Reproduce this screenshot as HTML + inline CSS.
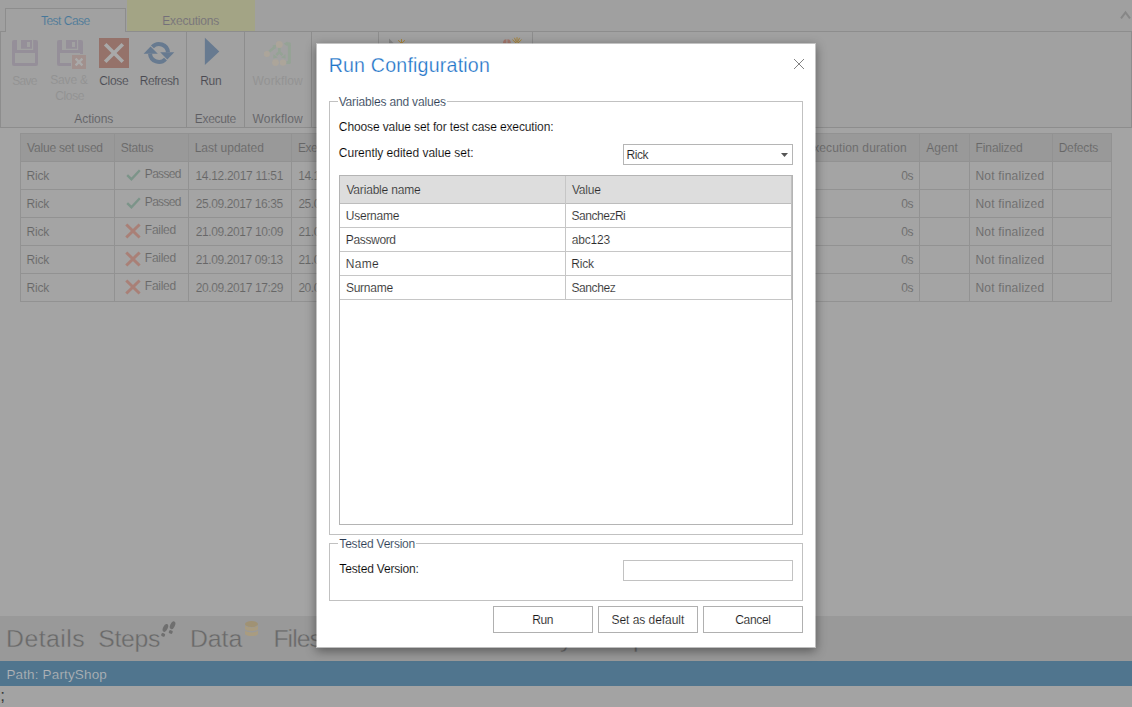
<!DOCTYPE html>
<html>
<head>
<meta charset="utf-8">
<title>Run Configuration</title>
<style>
html,body{margin:0;padding:0;}
body{width:1132px;height:707px;overflow:hidden;position:relative;background:#a4a4a4;font-family:"Liberation Sans", sans-serif;}
.t{position:absolute;white-space:nowrap;line-height:normal;font-family:"Liberation Sans", sans-serif;}
.b{position:absolute;box-sizing:border-box;}
.vl{position:absolute;width:1px;background:#929292;}
.hl{position:absolute;height:1px;background:#929292;}
svg{position:absolute;overflow:visible;}
</style>
</head>
<body>
<!-- ===== dimmed application background ===== -->
<div class="b" style="left:0;top:0;width:1132px;height:31px;background:#a0a0a0;"></div>
<div class="b" style="left:127px;top:0;width:128px;height:31px;background:#a3a485;"></div>
<!-- ribbon -->
<div class="b" style="left:0;top:31px;width:1132px;height:97px;background:#a1a1a1;border:1px solid #8d8d8d;"></div>
<div class="b" style="left:5px;top:8px;width:121px;height:24px;background:#a1a1a1;border:1px solid #8d8d8d;border-bottom:none;"></div>
<div class="vl" style="left:186px;top:32px;height:95px;background:#8d8d8d;"></div>
<div class="vl" style="left:244px;top:32px;height:95px;background:#8d8d8d;"></div>
<div class="vl" style="left:311px;top:32px;height:95px;background:#8d8d8d;"></div>
<div class="vl" style="left:378px;top:32px;height:95px;background:#8d8d8d;"></div>
<div class="vl" style="left:532px;top:32px;height:95px;background:#8d8d8d;"></div>
<!-- chevron -->
<svg style="left:1120px;top:10px;" width="11" height="10" viewBox="0 0 11 10"><path d="M1 8.3 L5.5 2.4 L10 8.3" fill="none" stroke="#878787" stroke-width="2"/></svg>

<!-- table -->
<div class="b" style="left:20px;top:133px;width:1092px;height:169px;border:1px solid #929292;"></div>
<div class="b" style="left:21px;top:134px;width:1090px;height:27px;background:#999999;"></div>
<div class="hl" style="left:20px;top:161px;width:1092px;"></div>
<div class="hl" style="left:20px;top:189px;width:1092px;"></div>
<div class="hl" style="left:20px;top:217px;width:1092px;"></div>
<div class="hl" style="left:20px;top:245px;width:1092px;"></div>
<div class="hl" style="left:20px;top:273px;width:1092px;"></div>
<div class="vl" style="left:114px;top:133px;height:169px;"></div>
<div class="vl" style="left:188px;top:133px;height:169px;"></div>
<div class="vl" style="left:291px;top:133px;height:169px;"></div>
<div class="vl" style="left:919px;top:133px;height:169px;"></div>
<div class="vl" style="left:969px;top:133px;height:169px;"></div>
<div class="vl" style="left:1052px;top:133px;height:169px;"></div>

<!-- bottom -->
<div class="b" style="left:0;top:616px;width:1132px;height:45px;background:#999999;"></div>
<div class="b" style="left:0;top:661px;width:1132px;height:25px;background:#50758e;"></div>
<div class="b" style="left:0;top:686px;width:1132px;height:21px;background:#a3a3a3;"></div>

<!-- save icon -->
<svg style="left:12px;top:40px;" width="26" height="26" viewBox="0 0 26 26"><rect x="0" y="0" width="26" height="26" rx="2" fill="#958f99"/><rect x="5" y="-1" width="16.2" height="11" fill="#a1a1a1"/><rect x="9" y="0" width="11" height="8.7" fill="#958f99"/><rect x="15" y="2" width="3" height="5" fill="#a1a1a1"/><rect x="3" y="13" width="20" height="10" fill="#a1a1a1"/></svg>
<!-- save & close icon -->
<svg style="left:57px;top:40px;" width="30" height="30" viewBox="0 0 30 30"><rect x="0" y="0" width="26" height="26" rx="2" fill="#958f99"/><rect x="5" y="-1" width="16.2" height="11" fill="#a1a1a1"/><rect x="9" y="0" width="11" height="8.7" fill="#958f99"/><rect x="15" y="2" width="3" height="5" fill="#a1a1a1"/><rect x="3" y="13" width="20" height="10" fill="#a1a1a1"/><rect x="14" y="14" width="16" height="16" fill="#a1a1a1"/><rect x="15" y="15" width="14" height="14" fill="#a1908d"/><path d="M18.6 18.6 L25.4 25.4 M25.4 18.6 L18.6 25.4" stroke="#aaaaaa" stroke-width="2.3" fill="none"/></svg>
<!-- close icon -->
<svg style="left:99px;top:38px;" width="30" height="30" viewBox="0 0 30 30"><rect width="30" height="30" fill="#95726a"/><path d="M6.2 6.2 L23.8 23.8 M23.8 6.2 L6.2 23.8" stroke="#a9a9a9" stroke-width="3.6" fill="none"/></svg>
<!-- refresh icon -->
<svg style="left:143px;top:41px;" width="32" height="24" viewBox="143 41 32 24"><path d="M152.4 46.9 A9 9 0 0 1 167.97 52.2" fill="none" stroke="#677a90" stroke-width="4"/><path d="M165.5 59.2 A9 9 0 0 1 150.03 53.8" fill="none" stroke="#677a90" stroke-width="4"/><path d="M160.2 52.2 H174.3 L167.3 59.4 Z" fill="#677a90"/><path d="M143.6 53.8 H157.8 L150.6 46.4 Z" fill="#677a90"/></svg>
<!-- run icon -->
<svg style="left:204px;top:37px;" width="16" height="29" viewBox="204 37 16 29"><path d="M204.9 37.7 L219.3 51.4 L204.9 65.1 Z" fill="#677a90"/></svg>
<!-- workflow icon (disabled) -->
<svg style="left:262px;top:40px;" width="30" height="27" viewBox="262 40 30 27"><g fill="none" stroke="#95a395" stroke-width="2.6" stroke-linejoin="round"><path d="M269.4 51.6 L274.4 47.2"/><path d="M279.3 47.5 V52 L276.4 55.2 M279.3 52 L282.4 55.2"/><path d="M286.4 62.4 H289.4 V43.8 H286.8" stroke-width="3"/></g><g fill="#95a395"><path d="M272.4 45.4 L276.6 44.4 L275.6 48.8 Z"/><path d="M273.4 54.2 L277.8 57.4 L273.2 58.4 Z"/><path d="M285.4 54.2 L281 57.4 L285.6 58.4 Z"/><path d="M287.4 41.4 V46.2 L283.6 43.8 Z"/></g><g fill="#aca59a"><circle cx="279.3" cy="44.5" r="3.5"/><circle cx="266.9" cy="53.9" r="3"/><circle cx="275.5" cy="62.6" r="3.4"/><circle cx="283" cy="62.6" r="3.2"/></g></svg>
<!-- hidden small ribbon icons peeking above the dialog -->
<svg style="left:388px;top:36px;" width="20" height="8" viewBox="388 36 20 8"><path d="M389 38.6 L393.6 43.2 H389 Z" fill="#858585"/><path d="M401.5 39 V43 M398 40.2 L401 43 M405 40.2 L402 43" stroke="#a8853c" stroke-width="1" fill="none"/></svg>
<svg style="left:502px;top:36px;" width="22" height="8" viewBox="502 36 22 8"><path d="M503 43.2 Q503 39.2 506.4 39.2 V43.2 Z M507.4 39.2 Q510.8 39.2 510.8 43.2 H507.4 Z" fill="#a4776c"/><path d="M517 37.2 V43 M512.4 39.6 L516 43 M521.6 39.6 L518 43 M514.4 37.8 L516.4 42 M519.6 37.8 L517.6 42" stroke="#a8853c" stroke-width="1" fill="none"/></svg>
<!-- status icons -->
<svg style="left:120px;top:161px;" width="30" height="140" viewBox="120 161 30 140">
<g fill="none" stroke="#7c9489" stroke-width="2.4"><path d="M127.2 175.2 L131.4 179.2 L139.8 170.2"/><path d="M127.2 203.2 L131.4 207.2 L139.8 198.2"/></g>
<g fill="none" stroke="#a98077" stroke-width="3"><path d="M126.3 224.5 L139.6 237.5 M139.6 224.5 L126.3 237.5"/><path d="M126.3 252.5 L139.6 265.5 M139.6 252.5 L126.3 265.5"/><path d="M126.3 280.5 L139.6 293.5 M139.6 280.5 L126.3 293.5"/></g></svg>
<!-- footprints -->
<svg style="left:160px;top:620px;" width="17" height="18" viewBox="160 620 17 18"><g fill="#6f6f6f"><ellipse cx="165.4" cy="627.9" rx="2.3" ry="4.2" transform="rotate(25 165.4 627.9)"/><rect x="161.3" y="633.2" width="3.7" height="3.3" rx="1.1" transform="rotate(25 163.1 634.8)"/><ellipse cx="172.6" cy="625.2" rx="2.3" ry="4.2" transform="rotate(25 172.6 625.2)"/><rect x="168.9" y="630.4" width="3.7" height="3.3" rx="1.1" transform="rotate(25 170.8 632)"/></g></svg>
<!-- database -->
<svg style="left:245px;top:621px;" width="13" height="16" viewBox="0 0 13 16"><ellipse cx="6.5" cy="3" rx="6.5" ry="3" fill="#a09274"/><path d="M0 4.6 C1 7 12 7 13 4.6 V8 C12 10.6 1 10.6 0 8 Z" fill="#a99c80"/><path d="M0 9.6 C1 12 12 12 13 9.6 V13 C12 15.8 1 15.8 0 13 Z" fill="#a99c80"/></svg>

<span class="t" style="left:40.93px;top:14.00px;font-size:12px;color:#47789a;letter-spacing:-0.500px;-webkit-text-stroke:0.15px #a1a1a1;">Test Case</span>
<span class="t" style="left:162.30px;top:14.00px;font-size:12px;color:#74707a;letter-spacing:-0.198px;-webkit-text-stroke:0.15px #a3a485;">Executions</span>
<span class="t" style="left:12.33px;top:74.00px;font-size:12px;color:#919191;letter-spacing:-0.717px;-webkit-text-stroke:0.15px #a1a1a1;">Save</span>
<span class="t" style="left:50.23px;top:73.00px;font-size:12px;color:#919191;letter-spacing:-0.170px;-webkit-text-stroke:0.15px #a1a1a1;">Save &amp;</span>
<span class="t" style="left:55.16px;top:89.00px;font-size:12px;color:#919191;letter-spacing:-0.337px;-webkit-text-stroke:0.15px #a1a1a1;">Close</span>
<span class="t" style="left:99.26px;top:74.00px;font-size:12px;color:#4a4a52;letter-spacing:-0.337px;-webkit-text-stroke:0.15px #a1a1a1;">Close</span>
<span class="t" style="left:139.63px;top:74.00px;font-size:12px;color:#4a4a52;letter-spacing:-0.414px;-webkit-text-stroke:0.15px #a1a1a1;">Refresh</span>
<span class="t" style="left:200.23px;top:74.00px;font-size:12px;color:#4a4a52;letter-spacing:-0.337px;-webkit-text-stroke:0.15px #a1a1a1;">Run</span>
<span class="t" style="left:252.55px;top:74.00px;font-size:12px;color:#919191;letter-spacing:0.154px;-webkit-text-stroke:0.15px #a1a1a1;">Workflow</span>
<span class="t" style="left:74.30px;top:112.00px;font-size:12px;color:#5e5e63;letter-spacing:-0.052px;-webkit-text-stroke:0.15px #a1a1a1;">Actions</span>
<span class="t" style="left:194.80px;top:112.00px;font-size:12px;color:#5e5e63;letter-spacing:-0.323px;-webkit-text-stroke:0.15px #a1a1a1;">Execute</span>
<span class="t" style="left:252.55px;top:112.00px;font-size:12px;color:#5e5e63;letter-spacing:0.154px;-webkit-text-stroke:0.15px #a1a1a1;">Workflow</span>
<span class="t" style="left:27.10px;top:141.00px;font-size:12px;color:#676767;letter-spacing:-0.196px;-webkit-text-stroke:0.15px #999999;">Value set used</span>
<span class="t" style="left:120.72px;top:141.00px;font-size:12px;color:#676767;letter-spacing:-0.270px;-webkit-text-stroke:0.15px #999999;">Status</span>
<span class="t" style="left:194.70px;top:141.00px;font-size:12px;color:#676767;letter-spacing:-0.022px;-webkit-text-stroke:0.15px #999999;">Last updated</span>
<span class="t" style="left:297.90px;top:141.00px;font-size:12px;color:#676767;letter-spacing:-0.450px;-webkit-text-stroke:0.15px #999999;">Exe</span>
<span class="t" style="left:805.00px;top:141.00px;font-size:12px;color:#676767;letter-spacing:0.130px;-webkit-text-stroke:0.15px #999999;">Execution duration</span>
<span class="t" style="left:926.21px;top:141.00px;font-size:12px;color:#676767;letter-spacing:0.051px;-webkit-text-stroke:0.15px #999999;">Agent</span>
<span class="t" style="left:975.53px;top:141.00px;font-size:12px;color:#676767;letter-spacing:-0.099px;-webkit-text-stroke:0.15px #999999;">Finalized</span>
<span class="t" style="left:1058.63px;top:141.00px;font-size:12px;color:#676767;letter-spacing:-0.169px;-webkit-text-stroke:0.15px #999999;">Defects</span>
<span class="t" style="left:26.53px;top:169.00px;font-size:12px;color:#676767;letter-spacing:-0.230px;-webkit-text-stroke:0.15px #a4a4a4;">Rick</span>
<span class="t" style="left:144.83px;top:167.00px;font-size:12px;color:#676767;letter-spacing:-0.691px;-webkit-text-stroke:0.15px #a4a4a4;">Passed</span>
<span class="t" style="left:195.47px;top:169.00px;font-size:12px;color:#676767;letter-spacing:-0.307px;-webkit-text-stroke:0.15px #a4a4a4;">14.12.2017 11:51</span>
<span class="t" style="left:298.17px;top:169.00px;font-size:12px;color:#676767;letter-spacing:-0.450px;-webkit-text-stroke:0.15px #a4a4a4;">14.12.</span>
<span class="t" style="left:901.29px;top:169.00px;font-size:12px;color:#676767;letter-spacing:-0.455px;-webkit-text-stroke:0.15px #a4a4a4;">0s</span>
<span class="t" style="left:975.40px;top:169.00px;font-size:12px;color:#676767;letter-spacing:0.220px;-webkit-text-stroke:0.15px #a4a4a4;">Not finalized</span>
<span class="t" style="left:26.53px;top:197.00px;font-size:12px;color:#676767;letter-spacing:-0.230px;-webkit-text-stroke:0.15px #a4a4a4;">Rick</span>
<span class="t" style="left:144.83px;top:195.00px;font-size:12px;color:#676767;letter-spacing:-0.691px;-webkit-text-stroke:0.15px #a4a4a4;">Passed</span>
<span class="t" style="left:195.68px;top:197.00px;font-size:12px;color:#676767;letter-spacing:-0.390px;-webkit-text-stroke:0.15px #a4a4a4;">25.09.2017 16:35</span>
<span class="t" style="left:298.38px;top:197.00px;font-size:12px;color:#676767;letter-spacing:-0.450px;-webkit-text-stroke:0.15px #a4a4a4;">25.09.</span>
<span class="t" style="left:901.29px;top:197.00px;font-size:12px;color:#676767;letter-spacing:-0.455px;-webkit-text-stroke:0.15px #a4a4a4;">0s</span>
<span class="t" style="left:975.40px;top:197.00px;font-size:12px;color:#676767;letter-spacing:0.220px;-webkit-text-stroke:0.15px #a4a4a4;">Not finalized</span>
<span class="t" style="left:26.53px;top:225.00px;font-size:12px;color:#676767;letter-spacing:-0.230px;-webkit-text-stroke:0.15px #a4a4a4;">Rick</span>
<span class="t" style="left:144.83px;top:223.00px;font-size:12px;color:#676767;letter-spacing:-0.271px;-webkit-text-stroke:0.15px #a4a4a4;">Failed</span>
<span class="t" style="left:195.68px;top:225.00px;font-size:12px;color:#676767;letter-spacing:-0.380px;-webkit-text-stroke:0.15px #a4a4a4;">21.09.2017 10:09</span>
<span class="t" style="left:298.38px;top:225.00px;font-size:12px;color:#676767;letter-spacing:-0.450px;-webkit-text-stroke:0.15px #a4a4a4;">21.09.</span>
<span class="t" style="left:901.29px;top:225.00px;font-size:12px;color:#676767;letter-spacing:-0.455px;-webkit-text-stroke:0.15px #a4a4a4;">0s</span>
<span class="t" style="left:975.40px;top:225.00px;font-size:12px;color:#676767;letter-spacing:0.220px;-webkit-text-stroke:0.15px #a4a4a4;">Not finalized</span>
<span class="t" style="left:26.53px;top:253.00px;font-size:12px;color:#676767;letter-spacing:-0.230px;-webkit-text-stroke:0.15px #a4a4a4;">Rick</span>
<span class="t" style="left:144.83px;top:251.00px;font-size:12px;color:#676767;letter-spacing:-0.271px;-webkit-text-stroke:0.15px #a4a4a4;">Failed</span>
<span class="t" style="left:195.68px;top:253.00px;font-size:12px;color:#676767;letter-spacing:-0.391px;-webkit-text-stroke:0.15px #a4a4a4;">21.09.2017 09:13</span>
<span class="t" style="left:298.38px;top:253.00px;font-size:12px;color:#676767;letter-spacing:-0.450px;-webkit-text-stroke:0.15px #a4a4a4;">21.09.</span>
<span class="t" style="left:901.29px;top:253.00px;font-size:12px;color:#676767;letter-spacing:-0.455px;-webkit-text-stroke:0.15px #a4a4a4;">0s</span>
<span class="t" style="left:975.40px;top:253.00px;font-size:12px;color:#676767;letter-spacing:0.220px;-webkit-text-stroke:0.15px #a4a4a4;">Not finalized</span>
<span class="t" style="left:26.53px;top:281.00px;font-size:12px;color:#676767;letter-spacing:-0.230px;-webkit-text-stroke:0.15px #a4a4a4;">Rick</span>
<span class="t" style="left:144.83px;top:279.00px;font-size:12px;color:#676767;letter-spacing:-0.271px;-webkit-text-stroke:0.15px #a4a4a4;">Failed</span>
<span class="t" style="left:195.68px;top:281.00px;font-size:12px;color:#676767;letter-spacing:-0.380px;-webkit-text-stroke:0.15px #a4a4a4;">20.09.2017 17:29</span>
<span class="t" style="left:298.38px;top:281.00px;font-size:12px;color:#676767;letter-spacing:-0.450px;-webkit-text-stroke:0.15px #a4a4a4;">20.09.</span>
<span class="t" style="left:901.29px;top:281.00px;font-size:12px;color:#676767;letter-spacing:-0.455px;-webkit-text-stroke:0.15px #a4a4a4;">0s</span>
<span class="t" style="left:975.40px;top:281.00px;font-size:12px;color:#676767;letter-spacing:0.220px;-webkit-text-stroke:0.15px #a4a4a4;">Not finalized</span>
<span class="t" style="left:6.09px;top:625.00px;font-size:24.8px;color:#6a6a6a;letter-spacing:0.464px;-webkit-text-stroke:0.4px #999999;">Details</span>
<span class="t" style="left:98.27px;top:625.00px;font-size:24.8px;color:#6a6a6a;letter-spacing:-0.300px;-webkit-text-stroke:0.4px #999999;">Steps</span>
<span class="t" style="left:189.89px;top:625.00px;font-size:24.8px;color:#6a6a6a;letter-spacing:-0.002px;-webkit-text-stroke:0.4px #999999;">Data</span>
<span class="t" style="left:273.39px;top:625.00px;font-size:24.8px;color:#6a6a6a;letter-spacing:-0.930px;-webkit-text-stroke:0.4px #999999;">Files</span>
<span class="t" style="left:500.79px;top:625.00px;font-size:24.8px;color:#6a6a6a;letter-spacing:-0.930px;-webkit-text-stroke:0.4px #999999;">History</span>
<span class="t" style="left:598.47px;top:625.00px;font-size:24.8px;color:#6a6a6a;letter-spacing:-0.930px;-webkit-text-stroke:0.4px #999999;">Steps</span>
<span class="t" style="left:6.38px;top:667.00px;font-size:13.5px;color:#b0b4b7;letter-spacing:0.153px;-webkit-text-stroke:0.15px #50758e;">Path: PartyShop</span>
<span class="t" style="left:0.20px;top:686.00px;font-size:17px;color:#3a3a3a;font-family:"Liberation Serif",serif;">;</span>

<!-- ===== dialog ===== -->
<div class="b" style="left:316px;top:43px;width:500px;height:605px;background:rgba(228,228,228,0.5);box-shadow:0 3px 10px 0 rgba(0,0,0,0.42);"></div>
<div class="b" style="left:317px;top:44px;width:498px;height:603px;background:#fff;"></div>
<svg style="left:794px;top:59px;" width="10" height="10" viewBox="0 0 10 10"><path d="M0 0 L10 10 M10 0 L0 10" stroke="#828282" stroke-width="1" fill="none"/></svg>
<!-- fieldset 1 -->
<div class="b" style="left:329px;top:101px;width:474px;height:434px;border:1px solid #c1c1c1;"></div>
<div class="b" style="left:338px;top:100px;width:109px;height:3px;background:#fff;"></div>
<!-- dropdown -->
<div class="b" style="left:623px;top:144px;width:170px;height:21px;border:1px solid #b5b5b5;background:#fff;"></div>
<svg style="left:781px;top:153px;" width="7" height="4" viewBox="0 0 7 4"><path d="M0 0 H7 L3.5 4 Z" fill="#555"/></svg>
<!-- grid -->
<div class="b" style="left:339px;top:175px;width:454px;height:350px;border:1px solid #b4b4b4;background:#fff;"></div>
<div class="b" style="left:340px;top:176px;width:451px;height:27px;background:#dddddd;"></div>
<div class="hl" style="left:340px;top:203px;width:452px;background:#bdbdbd;"></div>
<div class="hl" style="left:340px;top:227px;width:452px;background:#c6c6c6;"></div>
<div class="hl" style="left:340px;top:251px;width:452px;background:#c6c6c6;"></div>
<div class="hl" style="left:340px;top:275px;width:452px;background:#c6c6c6;"></div>
<div class="hl" style="left:340px;top:299px;width:452px;background:#c6c6c6;"></div>
<div class="vl" style="left:565px;top:176px;height:124px;background:#c6c6c6;"></div>
<div class="vl" style="left:791px;top:176px;height:124px;background:#c0c0c0;"></div>
<!-- fieldset 2 -->
<div class="b" style="left:329px;top:543px;width:474px;height:58px;border:1px solid #c1c1c1;"></div>
<div class="b" style="left:338px;top:542px;width:78px;height:3px;background:#fff;"></div>
<div class="b" style="left:623px;top:560px;width:170px;height:21px;border:1px solid #c2c2c2;background:#fff;"></div>
<!-- buttons -->
<div class="b" style="left:493px;top:606px;width:100px;height:27px;border:1px solid #b0b0b0;background:#fff;"></div>
<div class="b" style="left:598px;top:606px;width:100px;height:27px;border:1px solid #b0b0b0;background:#fff;"></div>
<div class="b" style="left:703px;top:606px;width:100px;height:27px;border:1px solid #b0b0b0;background:#fff;"></div>
<span class="t" style="left:328.65px;top:54.00px;font-size:19.6px;color:#1f74c8;letter-spacing:0.206px;-webkit-text-stroke:0.25px #fff;">Run Configuration</span>
<span class="t" style="left:338.63px;top:95.00px;font-size:12px;color:#2b3b52;letter-spacing:-0.171px;-webkit-text-stroke:0.12px #fff;">Variables and values</span>
<span class="t" style="left:338.87px;top:120.00px;font-size:12px;color:#000;letter-spacing:-0.119px;-webkit-text-stroke:0.12px #fff;">Choose value set for test case execution:</span>
<span class="t" style="left:338.87px;top:146.00px;font-size:12px;color:#000;letter-spacing:-0.028px;-webkit-text-stroke:0.12px #fff;">Curently edited value set:</span>
<span class="t" style="left:626.43px;top:148.00px;font-size:12px;color:#222;letter-spacing:-0.428px;-webkit-text-stroke:0.12px #fff;">Rick</span>
<span class="t" style="left:346.43px;top:183.00px;font-size:12px;color:#2c2c2c;letter-spacing:-0.183px;-webkit-text-stroke:0.12px #fff;">Variable name</span>
<span class="t" style="left:571.93px;top:183.00px;font-size:12px;color:#2c2c2c;letter-spacing:-0.194px;-webkit-text-stroke:0.12px #fff;">Value</span>
<span class="t" style="left:345.87px;top:209.00px;font-size:12px;color:#2c2c2c;letter-spacing:-0.269px;-webkit-text-stroke:0.12px #fff;">Username</span>
<span class="t" style="left:571.44px;top:209.00px;font-size:12px;color:#2c2c2c;letter-spacing:-0.460px;-webkit-text-stroke:0.12px #fff;">SanchezRi</span>
<span class="t" style="left:345.83px;top:233.00px;font-size:12px;color:#2c2c2c;letter-spacing:-0.355px;-webkit-text-stroke:0.12px #fff;">Password</span>
<span class="t" style="left:571.63px;top:233.00px;font-size:12px;color:#2c2c2c;letter-spacing:-0.150px;-webkit-text-stroke:0.12px #fff;">abc123</span>
<span class="t" style="left:345.83px;top:257.00px;font-size:12px;color:#2c2c2c;letter-spacing:0.282px;-webkit-text-stroke:0.12px #fff;">Name</span>
<span class="t" style="left:571.33px;top:257.00px;font-size:12px;color:#2c2c2c;letter-spacing:-0.242px;-webkit-text-stroke:0.12px #fff;">Rick</span>
<span class="t" style="left:345.94px;top:281.00px;font-size:12px;color:#2c2c2c;letter-spacing:-0.248px;-webkit-text-stroke:0.12px #fff;">Surname</span>
<span class="t" style="left:571.44px;top:281.00px;font-size:12px;color:#2c2c2c;letter-spacing:-0.413px;-webkit-text-stroke:0.12px #fff;">Sanchez</span>
<span class="t" style="left:339.36px;top:537.00px;font-size:12px;color:#2b3b52;letter-spacing:-0.218px;-webkit-text-stroke:0.12px #fff;">Tested Version</span>
<span class="t" style="left:339.36px;top:562.00px;font-size:12px;color:#000;letter-spacing:-0.177px;-webkit-text-stroke:0.12px #fff;">Tested Version:</span>
<span class="t" style="left:532.13px;top:613.00px;font-size:12px;color:#1a1a1a;letter-spacing:-0.373px;-webkit-text-stroke:0.12px #fff;">Run</span>
<span class="t" style="left:611.53px;top:613.00px;font-size:12px;color:#1a1a1a;letter-spacing:-0.047px;-webkit-text-stroke:0.12px #fff;">Set as default</span>
<span class="t" style="left:735.27px;top:613.00px;font-size:12px;color:#1a1a1a;letter-spacing:-0.346px;-webkit-text-stroke:0.12px #fff;">Cancel</span>
</body>
</html>
